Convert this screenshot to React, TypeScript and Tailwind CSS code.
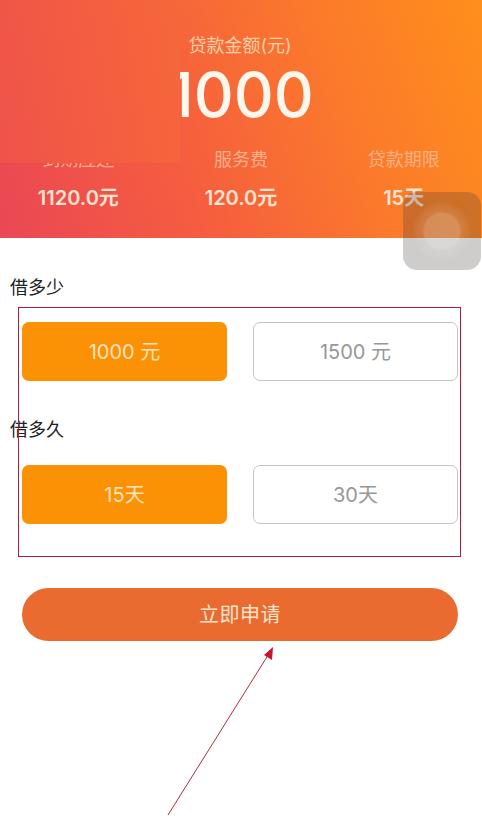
import React from 'react';

const font = "font-['Inter','Noto_Sans_CJK_SC',sans-serif]";

const stats = [
  { label: '到期应还', value: '1120.0元' },
  { label: '服务费', value: '120.0元' },
  { label: '贷款期限', value: '15天' },
];

function Choice({ text, active }: { text: string; active?: boolean }) {
  return (
    <button
      className={
        active
          ? 'h-[59px] w-[205px] rounded-[7px] bg-[#fb9104] text-[20px] text-[#fde3bd]'
          : 'h-[59px] w-[205px] rounded-[7px] border border-[#c4c4c4] bg-white text-[20px] text-[#979797]'
      }
    >
      {text}
    </button>
  );
}

export default function App() {
  return (
    <div className={`relative h-[830px] w-[482px] overflow-hidden bg-white ${font}`}>
      <div className="flex h-[238px] flex-col items-center bg-[linear-gradient(70deg,#ea4755_0%,#f55c40_35%,#fb7a2b_70%,#ff8f1b_100%)] pt-[36px]">
        <div className="pr-[2px] text-[18px] leading-[20px] text-[#fcd0a8]">贷款金额(元)</div>
        <div className="mt-[3px] text-[62px] font-medium leading-[72px] text-[#fff6ec]">1000</div>
        <div className="mt-[17px] grid w-[488px] grid-cols-3">
          {stats.map((s) => (
            <div key={s.label} className="flex flex-col items-center">
              <div className="text-[18px] leading-[24px] text-[#fbb088]">{s.label}</div>
              <div className="mt-[14px] text-[20px] font-semibold leading-[24px] text-[#fde3d0]">{s.value}</div>
            </div>
          ))}
        </div>
      </div>

      <div className="px-[10px]">
        <div className="mt-[38px] text-[18px] leading-[24px] text-[#222222]">借多少</div>
        <div className="mt-[22px] flex gap-[26px] pl-[12px]">
          <Choice text="1000 元" active />
          <Choice text="1500 元" />
        </div>
        <div className="mt-[37px] text-[18px] leading-[24px] text-[#222222]">借多久</div>
        <div className="mt-[23px] flex gap-[26px] pl-[12px]">
          <Choice text="15天" active />
          <Choice text="30天" />
        </div>
        <div className="mt-[64px] pl-[12px]">
          <button className="h-[53px] w-[436px] rounded-full bg-[#e96b30] text-[20px] tracking-[0.5px] text-[#fde2cc]">
            立即申请
          </button>
        </div>
      </div>

      {/* patch over the top left of the screenshot */}
      <div className="absolute left-0 top-0 h-[163px] w-[180px] bg-[linear-gradient(80deg,#ef534b_0%,#f35c42_45%,#f6673a_100%)]" />

      {/* floating assistive button */}
      <div className="absolute left-[403px] top-[192px] flex h-[78px] w-[78px] items-center justify-center rounded-[14px] bg-[rgba(60,55,50,0.25)]">
        <div className="h-[60px] w-[60px] rounded-full bg-[radial-gradient(closest-side,rgba(255,255,255,0.22)_0%,rgba(255,255,255,0.22)_58%,rgba(255,255,255,0.1)_66%,rgba(255,255,255,0.06)_85%,rgba(255,255,255,0)_100%)]" />
      </div>

      {/* red annotation */}
      <div className="absolute left-[18px] top-[307px] h-[250px] w-[443px] border border-[#a8203c]" />
      <svg className="absolute left-0 top-0" width="482" height="830" viewBox="0 0 482 830" fill="none">
        <line x1="168" y1="815" x2="270" y2="652" stroke="#b02a3e" strokeWidth="1" />
        <polygon points="273,647 272,660 264,655" fill="#c8142c" />
      </svg>
    </div>
  );
}
